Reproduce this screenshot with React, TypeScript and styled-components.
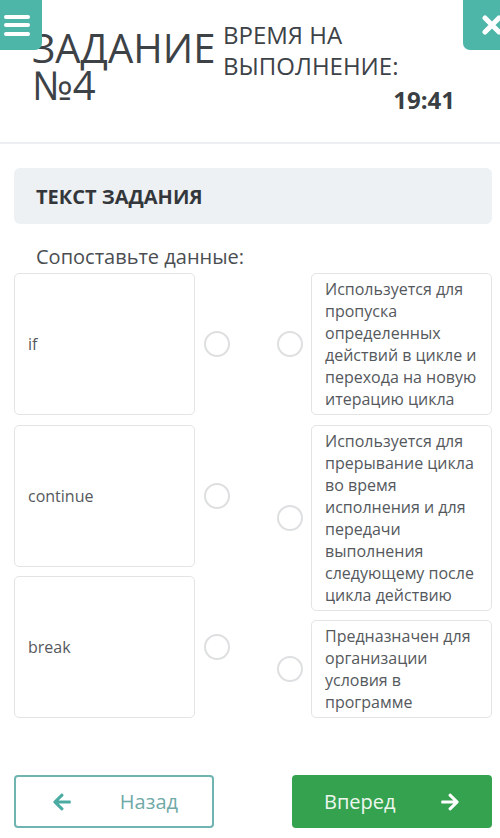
import React from 'react'
import styled, { createGlobalStyle } from 'styled-components'
import { FaArrowLeft, FaArrowRight } from 'react-icons/fa'


const GlobalStyle = createGlobalStyle`
  html, body {
    margin: 0;
    padding: 0;
    background: #ffffff;
    overflow: hidden;
  }
  body {
    font-family: "Open Sans", "Liberation Sans", sans-serif;
    color: #3d4247;
  }
  * {
    box-sizing: border-box;
  }
`

const leftItems = ['if', 'continue', 'break']

const rightItems = [
  'Используется для\nпропуска\nопределенных\nдействий в цикле и\nперехода на новую\nитерацию цикла',
  'Используется для\nпрерывание цикла\nво время\nисполнения и для\nпередачи\nвыполнения\nследующему после\nцикла действию',
  'Предназначен для\nорганизации\nусловия в\nпрограмме',
]

const App: React.FC = () => {
  return (
    <StyledPage>
      <GlobalStyle />
      <StyledMenuButton aria-label="menu">
        <StyledBurgerLine />
        <StyledBurgerLine />
        <StyledBurgerLine />
      </StyledMenuButton>
      <StyledCloseButton aria-label="close">
        <svg width="22" height="22" viewBox="0 0 22 22">
          <path d="M4 4 L18 18 M18 4 L4 18" stroke="#ffffff" strokeWidth="5" strokeLinecap="round" />
        </svg>
      </StyledCloseButton>

      <StyledHeader>
        <StyledTitle>ЗАДАНИЕ<br />№4</StyledTitle>
        <StyledTimer>
          <div>ВРЕМЯ НА</div>
          <div>ВЫПОЛНЕНИЕ:</div>
          <StyledTime>19:41</StyledTime>
        </StyledTimer>
      </StyledHeader>

      <StyledTaskPanel>ТЕКСТ ЗАДАНИЯ</StyledTaskPanel>
      <StyledInstruction>Сопоставьте данные:</StyledInstruction>

      <StyledMatching>
        <StyledColumn>
          {leftItems.map((item) => (
            <StyledRow key={item}>
              <StyledLeftCard>{item}</StyledLeftCard>
              <StyledDot />
            </StyledRow>
          ))}
        </StyledColumn>
        <StyledColumn>
          {rightItems.map((item, i) => (
            <StyledRow key={i} gap={8}>
              <StyledDot />
              <StyledRightCard>{item}</StyledRightCard>
            </StyledRow>
          ))}
        </StyledColumn>
      </StyledMatching>

      <StyledFooter>
        <StyledNavButton variant="outline">
          <FaArrowLeft size={20} color="#4aaba3" />
          <span>Назад</span>
        </StyledNavButton>
        <StyledNavButton variant="primary">
          <span>Вперед</span>
          <FaArrowRight size={20} color="#ffffff" />
        </StyledNavButton>
      </StyledFooter>
    </StyledPage>
  )
}

const StyledPage = styled.div`
  position: relative;
  width: 500px;
  height: 838px;
  overflow: hidden;
`

const StyledMenuButton = styled.div`
  position: absolute;
  top: -8px;
  left: -8px;
  width: 50px;
  height: 58px;
  background: #4db6a9;
  border-radius: 7px;
  display: flex;
  flex-direction: column;
  justify-content: center;
  gap: 4.5px;
  padding: 8px 0 0 12px;
  z-index: 2;
`

const StyledBurgerLine = styled.span`
  display: block;
  width: 26px;
  height: 4px;
  border-radius: 2px;
  background: #ffffff;
`

const StyledCloseButton = styled.div`
  position: absolute;
  top: -8px;
  left: 463px;
  width: 60px;
  height: 58px;
  background: #4db6a9;
  border-radius: 7px;
  display: flex;
  align-items: center;
  padding: 8px 0 0 18px;
  z-index: 2;
`

const StyledHeader = styled.div`
  display: flex;
  height: 144px;
  padding: 19px 45px 0 32px;
  border-bottom: 2px solid #eceef1;
`

const StyledTitle = styled.div`
  flex: none;
  width: 181px;
  margin-top: 10px;
  font-size: 40px;
  line-height: 37px;
  color: #3d4247;
  white-space: nowrap;
`

const StyledTimer = styled.div`
  flex: 1;
  margin-left: 10px;
  font-size: 24px;
  line-height: 31px;
  color: #3d4247;
  white-space: nowrap;
`

const StyledTime = styled.div`
  margin-top: 3px;
  text-align: right;
  font-weight: 700;
  color: #3a3f44;
`

const StyledTaskPanel = styled.div`
  display: flex;
  align-items: center;
  height: 56px;
  margin: 24px 8px 0 14px;
  padding-left: 22px;
  border-radius: 6px;
  background: #eef1f4;
  font-size: 20px;
  font-weight: 700;
  color: #33373b;
`

const StyledInstruction = styled.div`
  margin-top: 20px;
  padding-left: 36px;
  font-size: 20px;
  line-height: 26px;
  color: #4a4e52;
`

const StyledMatching = styled.div`
  display: flex;
  justify-content: space-between;
  margin-top: 3px;
  padding: 0 8px 0 14px;
`

const StyledColumn = styled.div`
  display: flex;
  flex-direction: column;
  gap: 9.5px;
`

const StyledRow = styled.div<{ gap?: number }>`
  display: flex;
  align-items: center;
  gap: ${props => props.gap ?? 9}px;
`

const StyledLeftCard = styled.div`
  display: flex;
  align-items: center;
  width: 181px;
  height: 142px;
  padding: 0 13px;
  border: 1px solid #e2e4e6;
  border-radius: 5px;
  font-size: 16px;
  color: #55595d;
`

const StyledRightCard = styled.div`
  width: 181px;
  padding: 4px 4px 4px 13px;
  border: 1px solid #e2e4e6;
  border-radius: 5px;
  font-size: 16px;
  line-height: 22px;
  color: #55595d;
  white-space: pre;
`

const StyledDot = styled.span`
  flex: none;
  width: 26px;
  height: 26px;
  border: 2px solid #dedfe0;
  border-radius: 50%;
`

const StyledFooter = styled.div`
  display: flex;
  justify-content: space-between;
  margin-top: 57px;
  padding: 0 8px 0 14px;
`

const StyledNavButton = styled.div<{ variant: 'outline' | 'primary' }>`
  display: flex;
  align-items: center;
  justify-content: space-between;
  width: 200px;
  height: 53px;
  border-radius: 4px;
  font-size: 20px;
  padding: ${props => props.variant === 'outline' ? '0 34px 0 36px' : '0 32px'};
  border: ${props => props.variant === 'outline' ? '2px solid #6fb4b0' : 'none'};
  background: ${props => props.variant === 'outline' ? '#ffffff' : '#35a250'};
  color: ${props => props.variant === 'outline' ? '#6fa9a8' : '#edf7ee'};
`

export default App
